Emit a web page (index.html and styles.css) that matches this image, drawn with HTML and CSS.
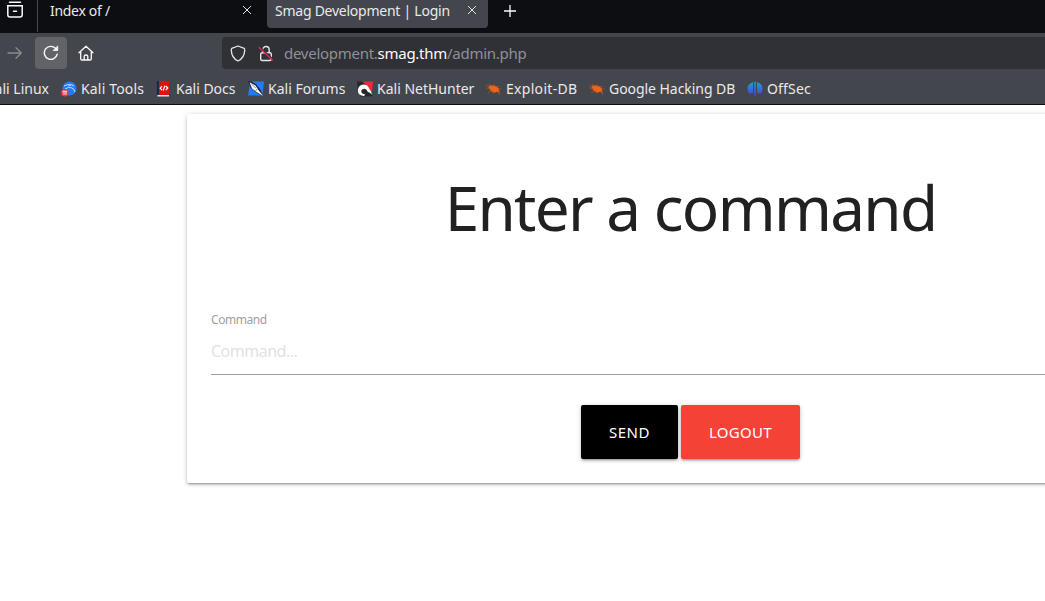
FILE: index.html
```html
<!DOCTYPE html>
<html lang="en">
<head>
<meta charset="utf-8">
<title>Smag Development | Login</title>
<link rel="stylesheet" href="styles.css">
</head>
<body>
<header class="browser">
  <div class="tabs">
    <div class="recent">
      <svg width="18" height="18" viewBox="0 0 18 18" fill="none" stroke="#fbfbfe" stroke-width="1.5" stroke-linecap="round"><path d="M3.5 1.2h11M1.8 4.8h14.4v9a2.3 2.3 0 0 1-2.3 2.3H4.1a2.3 2.3 0 0 1-2.3-2.3zM7.5 10.2h3"/></svg>
    </div>
    <div class="tab">
      <span class="tab-title index-title">Index of /</span>
      <svg class="close" width="10" height="10" viewBox="0 0 10 10" stroke="#e4e4e7" stroke-width="1"><path d="M1 1l8 8M9 1l-8 8"/></svg>
    </div>
    <div class="tab active">
      <span class="tab-title smag-title">Smag Development | Login</span>
      <svg class="close" width="10" height="10" viewBox="0 0 10 10" stroke="#e4e4e7" stroke-width="1"><path d="M1 1l8 8M9 1l-8 8"/></svg>
    </div>
    <svg class="new-tab" width="12" height="12" viewBox="0 0 12 12" stroke="#fbfbfe" stroke-width="1.3"><path d="M6 0v12M0 6h12"/></svg>
  </div>
  <div class="toolbar">
    <svg class="forward" width="16" height="16" viewBox="0 0 16 16" fill="none" stroke="#8b8b90" stroke-width="1.3" stroke-linecap="round" stroke-linejoin="round"><path d="M1 8h13M9 2.8L14.3 8 9 13.2"/></svg>
    <div class="reload">
      <svg width="16" height="16" viewBox="0 0 16 16" fill="none" stroke="#fbfbfe" stroke-width="1.4" stroke-linecap="round"><path d="M14.2 9.2A6.5 6.5 0 1 1 12.4 3.2"/><path d="M14.7 1.3v4.2h-4.2z" fill="#fbfbfe" stroke-width=".8" stroke-linejoin="round"/></svg>
    </div>
    <svg class="home" width="16" height="16" viewBox="0 0 16 16" fill="none" stroke="#fbfbfe" stroke-width="1.3" stroke-linecap="round" stroke-linejoin="round"><path d="M1 7.8L8 1.2l7 6.6M2.7 6.8v6.9q0 1.3 1.3 1.3h8q1.3 0 1.3-1.3V6.8M6.2 15v-3.8q0-1.2 1.8-1.2t1.8 1.2V15"/></svg>
    <div class="urlbar">
      <svg width="16" height="17" viewBox="0 0 16 17" fill="none" stroke="#e6e6e8" stroke-width="1.3" stroke-linejoin="round"><path d="M8 1L14.2 3.4Q14.8 3.7 14.7 5.4C14.5 10.3 12.2 14 8 16 3.8 14 1.5 10.3 1.3 5.4Q1.2 3.7 1.8 3.4z"/></svg>
      <svg class="lock" width="16" height="17" viewBox="0 0 16 17" fill="none" stroke="#e6e6e8" stroke-width="1.4"><rect x="2.7" y="7.7" width="10.6" height="7.8" rx="1.5"/><path d="M4.8 7.5V4.7a3.2 3.2 0 0 1 6.4 0v2.8"/><path d="M1.6 1.4l14 13.4" stroke="#303137" stroke-width="1.4"/><path d="M.8 2.2l14 13.4" stroke="#e22850" stroke-width="1.4"/></svg>
      <span class="url">development.<b>smag.thm</b>/admin.php</span>
    </div>
  </div>
  <nav class="bookmarks">
    <a class="bm linux"><span>Kali Linux</span></a>
    <a class="bm tools"><svg width="16" height="16" viewBox="0 0 16 16"><circle cx="8.5" cy="7.5" r="7" fill="#2879f8"/><path d="M3 5q4-2.5 7-.5M4 8q4-3 7-1 2.5 1 3 4M7 4q4-1 6 1" fill="none" stroke="#c4dcff" stroke-width="1"/><circle cx="3.8" cy="11.7" r="3.8" fill="#ee3743"/><path d="M1.5 10.3h4.6M3 10.3v3.5M5 10.3v3.5" stroke="#fff" stroke-width=".9"/></svg><span>Kali Tools</span></a>
    <a class="bm docs"><svg width="16" height="16" viewBox="0 0 16 16"><path d="M.8 0h2.4v14H.8z" fill="#142b50"/><path d="M3 0h10v14H3z" fill="#dd1111"/><path d="M1.5 14h11.5v1.5H1.5z" fill="#e8e4e4"/><path d="M6 5.2L4.2 7.2 6 9.2M9.8 5l2 2-2 2M8.8 4.7L7.2 9.6" fill="none" stroke="#fff" stroke-width="1.2"/></svg><span>Kali Docs</span></a>
    <a class="bm forums"><svg width="16" height="16" viewBox="0 0 16 16"><path d="M2 .6h14l-1.6 14H.2z" fill="#247bfa"/><path d="M0 0l3 .2 5 3 4 5 3.5 7-7-3.5-6-5z" fill="#202329"/><path d="M1.5 1.2l6 3.3 3.2 5L15.4 15 8.5 11 4 7.5z" fill="#fff"/><path d="M3.5 3.2l4.5 4M9 8l-1.5 2.3" stroke="#555a64" stroke-width=".7"/></svg><span>Kali Forums</span></a>
    <a class="bm nethunter"><svg width="16" height="16" viewBox="0 0 16 16"><path d="M2 .6h14l-1.6 14H3z" fill="#f52736"/><path d="M0 .5l5 0 3 2.5 5 5 2.5 7-4 .5H4L1 12z" fill="#25262b"/><path d="M.8 9.8Q1 4.2 6.5 3.6q3.8 0 5.5 3.4 2.3 2.5 3 7-2-3-4.2-3Q9.5 7.8 7 7.8q-2.7.2-2.8 2.5.3 2.8 4.2 3.2L7 15q-6-.3-6.2-5.2z" fill="#fff"/></svg><span>Kali NetHunter</span></a>
    <a class="bm exploit"><svg width="16" height="16" viewBox="0 0 16 16"><path d="M3 4.5l4 0 3 .7 3 2.3-.2 2.2 1.4 2.3-2.7-1.2L8 11.7 5 10 2.5 7z" fill="#f26414"/><path d="M0 4l4 1.8M3 2.5l3 3M8 3l1 3M0 6.8l5 1M10 5.5l3.5 0M12 8h3.5M2 11.5l4-2M7 12.5v-3M11 10l3 4" stroke="#b9541e" stroke-width=".7"/></svg><span>Exploit-DB</span></a>
    <a class="bm google"><svg width="16" height="16" viewBox="0 0 16 16"><path d="M3 4.5l4 0 3 .7 3 2.3-.2 2.2 1.4 2.3-2.7-1.2L8 11.7 5 10 2.5 7z" fill="#f26414"/><path d="M0 4l4 1.8M3 2.5l3 3M8 3l1 3M0 6.8l5 1M10 5.5l3.5 0M12 8h3.5M2 11.5l4-2M7 12.5v-3M11 10l3 4" stroke="#b9541e" stroke-width=".7"/></svg><span>Google Hacking DB</span></a>
    <a class="bm offsec"><svg width="16" height="16" viewBox="0 0 16 16"><defs><linearGradient id="os" x1="0" y1="0" x2="0" y2="1"><stop offset="0" stop-color="#14a9c2"/><stop offset="1" stop-color="#5b31ed"/></linearGradient></defs><path d="M6 1v11.5Q4.5 10.5 3 13.2.5 11 .5 7.3T6 1zM7.2.8h1.6v14.7q-1.4-.4-1.6-2.5zM10 1q5.5 2 5.5 6.3T13 13.2q-1.5-2.7-3-.7z" fill="url(#os)"/></svg><span>OffSec</span></a>
  </nav>
</header>
<main class="page">
  <section class="card">
    <h1>Enter a command</h1>
    <form class="form">
      <label for="command">Command</label>
      <input id="command" type="text" placeholder="Command...">
      <div class="actions">
        <button type="button" class="btn send">SEND</button>
        <button type="button" class="btn logout">LOGOUT</button>
      </div>
    </form>
  </section>
</main>
</body>
</html>
```
FILE: styles.css
```css
* { box-sizing: border-box; }
body { margin: 0; width: 1045px; height: 601px; overflow: hidden; background: #fff; font-family: "Noto Sans", sans-serif; }
svg { display: block; flex: none; }
.browser { height: 105px; background: #44464d; border-bottom: 1px solid #0c0c0f; color: #e9e9eb; overflow: hidden; }
.tabs { display: flex; height: 33px; background: #0d0e12; }
.recent { width: 38px; height: 32px; padding: 1px 0 0 6px; border-right: 1px solid #494a4f; }
.tab { display: flex; justify-content: space-between; width: 221px; height: 28px; padding: 0 11px 0 8px; margin-left: 4px; font-size: 14px; line-height: 21px; white-space: nowrap; }
.index-title { letter-spacing: -.3px; }
.smag-title { letter-spacing: -.25px; }
.tab .close { margin-top: 5px; }
.active { background: #44464d; border-radius: 0 0 4px 4px; }
.new-tab { margin: 5px 0 0 16px; }
.toolbar { display: flex; align-items: center; height: 40px; }
.forward { margin-left: 7px; }
.reload { display: grid; place-items: center; width: 32px; height: 32px; margin-left: 12px; border-radius: 4px; background: #626369; }
.home { margin-left: 11px; }
.urlbar { display: flex; align-items: center; flex: 1; height: 32px; margin-left: 128px; padding-left: 8px; border-radius: 4px 0 0 4px; background: #303137; }
.lock { margin-left: 12px; }
.url { margin-left: 10px; font-size: 15px; line-height: 22px; letter-spacing: -.27px; color: #8f9095; white-space: nowrap; }
.url b { font-weight: 400; color: #fbfbfe; }
.bookmarks { display: flex; height: 31px; font-size: 14px; line-height: 20px; white-space: nowrap; }
.bm { display: flex; flex: none; gap: 4px; padding-top: 6px; }
.bm svg { margin-top: 2px; }
.linux { width: 61px; justify-content: flex-end; padding-right: 12px; }
.tools { width: 95px; letter-spacing: .17px; }
.docs { width: 92px; }
.forums { width: 109px; }
.nethunter { width: 129px; }
.exploit { width: 103px; letter-spacing: .3px; }
.google { width: 158px; letter-spacing: -.05px; }
.offsec { letter-spacing: .17px; }
.page { padding: 9px 0 8px 187px; overflow: hidden; }
.card { width: 1007px; height: 369px; padding: 0 24px; border-radius: 2px; background: #fff; box-shadow: 0 2px 2px rgba(0,0,0,.14), 0 3px 1px -2px rgba(0,0,0,.12), 0 1px 5px rgba(0,0,0,.2); }
h1 { margin: 0; padding-top: 56px; font-size: 62px; line-height: 74px; font-weight: 400; letter-spacing: -1.7px; text-align: center; color: #212121; white-space: nowrap; }
.form { display: flex; flex-direction: column; margin-top: 66px; }
label { height: 18px; font-size: 12px; line-height: 20px; letter-spacing: -.45px; color: #9e9e9e; }
input { height: 47px; padding: 0; border: 0; border-bottom: 1px solid #9e9e9e; background: none; font: 16px "Noto Sans", sans-serif; letter-spacing: -.5px; outline: 0; }
input::placeholder { color: #e2e2e2; opacity: 1; }
.actions { display: flex; justify-content: center; gap: 3px; margin-top: 30px; }
.btn { height: 54px; padding: 0; border: 0; border-radius: 2px; color: #fff; font: 15px "Noto Sans", sans-serif; letter-spacing: .5px; box-shadow: 0 2px 2px rgba(0,0,0,.14), 0 3px 1px -2px rgba(0,0,0,.12), 0 1px 5px rgba(0,0,0,.2); }
.send { width: 97px; background: #000; }
.logout { width: 119px; background: #f44336; letter-spacing: .3px; }
```
